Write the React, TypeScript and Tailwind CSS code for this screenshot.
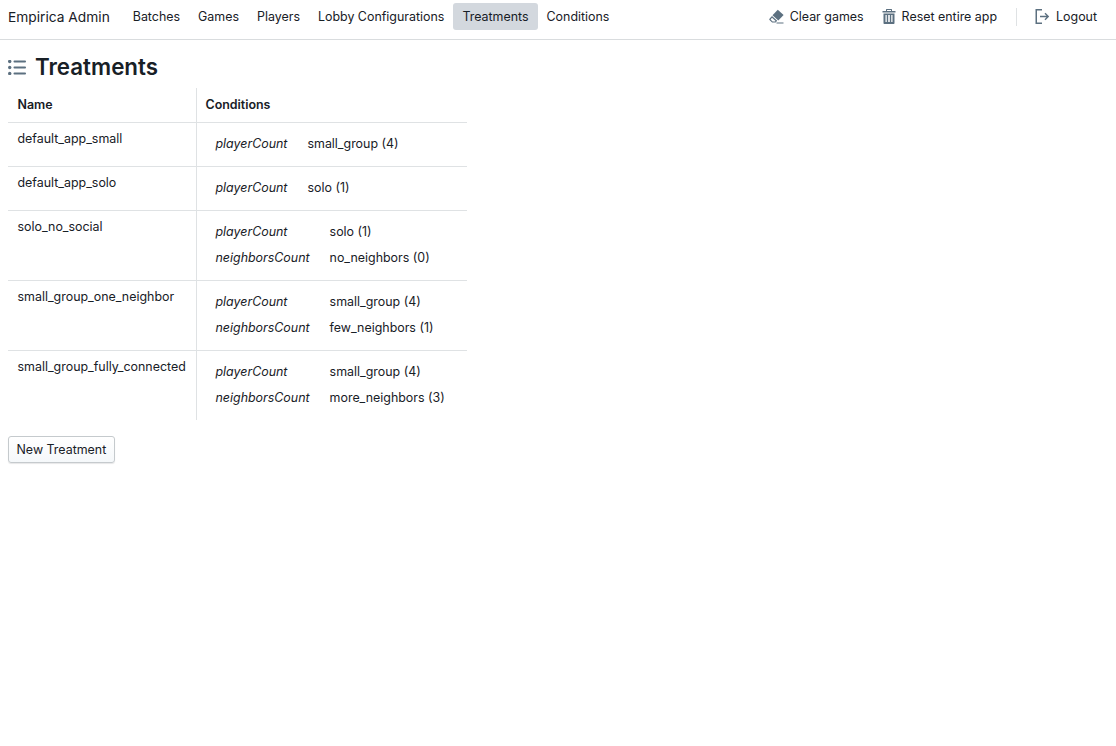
/**
 * Empirica Admin - Treatments list
 */

import React from 'react';

interface Factor {
  name: string;
  value: string;
}

interface Treatment {
  name: string;
  factors: Factor[];
}

const treatments: Treatment[] = [
  { name: 'default_app_small', factors: [{ name: 'playerCount', value: 'small_group (4)' }] },
  { name: 'default_app_solo', factors: [{ name: 'playerCount', value: 'solo (1)' }] },
  {
    name: 'solo_no_social',
    factors: [
      { name: 'playerCount', value: 'solo (1)' },
      { name: 'neighborsCount', value: 'no_neighbors (0)' }
    ]
  },
  {
    name: 'small_group_one_neighbor',
    factors: [
      { name: 'playerCount', value: 'small_group (4)' },
      { name: 'neighborsCount', value: 'few_neighbors (1)' }
    ]
  },
  {
    name: 'small_group_fully_connected',
    factors: [
      { name: 'playerCount', value: 'small_group (4)' },
      { name: 'neighborsCount', value: 'more_neighbors (3)' }
    ]
  }
];

const navItems = ['Batches', 'Games', 'Players', 'Lobby Configurations', 'Treatments', 'Conditions'];

const EraserIcon = () => (
  <svg width="15" height="15" viewBox="0 0 15 15" fill="#5c7080">
    <path d="M8.800.8 14.600 5.900 9.300 11.500 3.500 6.300z" />
    <path fillRule="evenodd" d="M3 7 .5 9.700c-.4.400-.4 1 0 1.400l2.600 2.400h3.500l1.600-1.700zM3 8.700 6.600 12l-.6.600H3.600L1.600 10.400z" />
    <path d="M7.500 13.500H14.500V14.500H7.500z" />
  </svg>
);

const TrashIcon = () => (
  <svg width="14" height="15" viewBox="0 0 14 15" fill="#5c7080">
    <path fillRule="evenodd" d="M4.500 0h5c.3 0 .5.200.5.500V2h3.500v1.500H.5V2H4V.500c0-.3.200-.5.500-.5zM5 1v1h4V1z" />
    <path fillRule="evenodd" d="M1.500 4.500h11V14c0 .6-.4 1-1 1h-9c-.6 0-1-.4-1-1zm2 1.500v7h1.250V6zm2.700 0v7h1.600V6zm3.050 0v7h1.250V6z" />
  </svg>
);

const LogoutIcon = () => (
  <svg width="15" height="15" viewBox="0 0 15 15" fill="#5c7080">
    <path d="M.5 0h6.500v1.500H2v12h5V15H.5z" />
    <path d="M10.500 3.800 14.200 7.500 10.500 11.200 9.500 10.200 11.500 8.250H5V6.750h6.500L9.500 4.800z" />
  </svg>
);

const PropertiesIcon = () => (
  <svg width="18" height="15" viewBox="0 0 18 15" fill="#5c7080">
    <circle cx="1.700" cy="1.500" r="1.700" />
    <circle cx="1.700" cy="7.500" r="1.700" />
    <circle cx="1.700" cy="13.500" r="1.700" />
    <rect x="5.500" y="0.600" width="12.500" height="1.800" rx="0.900" />
    <rect x="5.500" y="6.600" width="12.500" height="1.800" rx="0.900" />
    <rect x="5.500" y="12.600" width="12.500" height="1.800" rx="0.900" />
  </svg>
);

export default function App() {
  return (
    <div className="min-h-[746px] bg-white font-['Inter','Liberation_Sans',sans-serif] text-[12.43px] text-[#182026]">
      {/* Top bar */}
      <nav className="flex h-10 items-start justify-between border-b border-[#d9dcde] pl-2 pr-[10px] pt-[3px]">
        <div className="flex items-center">
          <div className="mr-[14px] pt-[2px] text-[13.75px]">Empirica Admin</div>
          {navItems.map(item => (
            <button
              key={item}
              className={`flex h-[27px] items-center rounded-[3px] px-[9px] pt-[2px] ${
                item === 'Treatments' ? 'bg-[#d3d8de]' : ''
              }`}
            >
              {item}
            </button>
          ))}
        </div>
        <div className="flex items-center">
          <button className="flex h-[27px] items-center gap-[6px] px-[9px]">
            <EraserIcon />
            <span className="pt-[2px]">Clear games</span>
          </button>
          <button className="flex h-[27px] items-center gap-[6px] px-[9px]">
            <TrashIcon />
            <span className="pt-[2px]">Reset entire app</span>
          </button>
          <span className="ml-[10px] mr-[9px] h-[18px] w-px bg-[#dfe2e4]" />
          <button className="flex h-[27px] items-center gap-[6px] px-[9px]">
            <LogoutIcon />
            <span className="pt-[2px]">Logout</span>
          </button>
        </div>
      </nav>

      <main className="px-2">
        <h1 className="flex h-12 items-center gap-[9px] pt-[7px] text-[22.35px] font-semibold leading-none">
          <PropertiesIcon />
          Treatments
        </h1>

        <table className="border-collapse text-left">
          <thead>
            <tr className="h-[34px]">
              <th className="w-[188px] border-r border-[#dfe2e4] pl-[9.5px] pr-[9px] pt-[2px] font-semibold">Name</th>
              <th className="w-[271px] px-[9px] pt-[2px] font-semibold">Conditions</th>
            </tr>
          </thead>
          <tbody>
            {treatments.map(t => (
              <tr key={t.name} className="border-t border-[#dfe2e4]">
                <td className="border-r border-[#dfe2e4] pl-[9.5px] pr-[9px] pt-[7px] align-top">{t.name}</td>
                <td className="px-[9px] pb-[9px] pt-[8px] align-top">
                  <table>
                    <tbody>
                      {t.factors.map(f => (
                        <tr key={f.name} className="h-[26px]">
                          <td className="pl-[10px] pr-[20px] pt-[2px] italic">{f.name}</td>
                          <td className="pt-[2px]">{f.value}</td>
                        </tr>
                      ))}
                    </tbody>
                  </table>
                </td>
              </tr>
            ))}
          </tbody>
        </table>

        <button className="mt-4 h-[27px] rounded-[3px] border border-[#c5cacd] bg-gradient-to-b from-white to-[#f5f8fa] px-[7.5px] pt-[2px] shadow-[0_1px_1px_rgba(16,22,26,0.1)]">
          New Treatment
        </button>
      </main>
    </div>
  );
}
